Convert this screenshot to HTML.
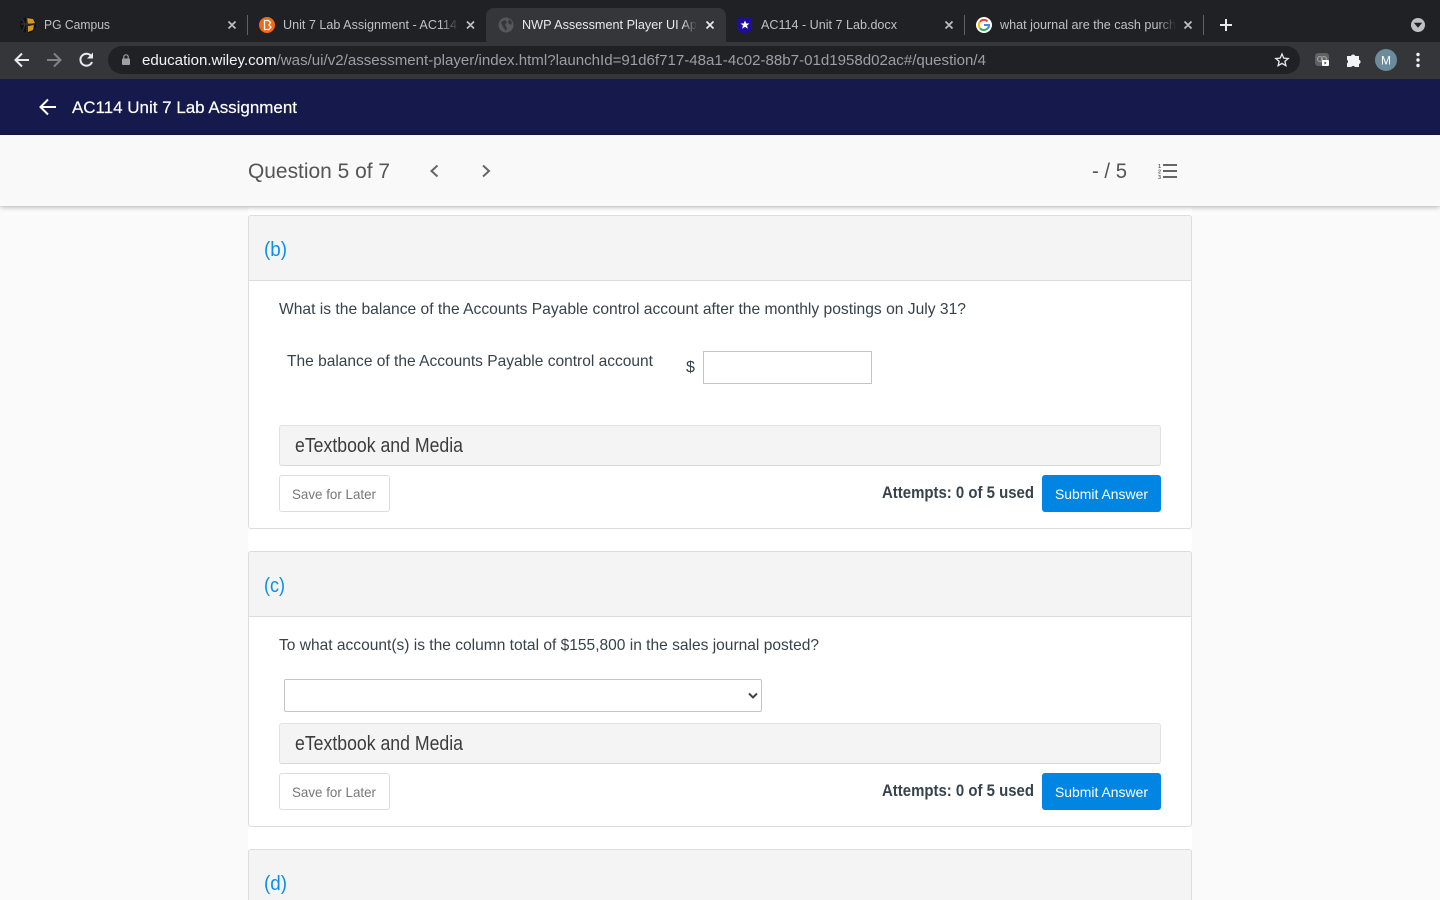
<!DOCTYPE html>
<html lang="en"><head><meta charset="utf-8"><title>NWP Assessment Player UI App</title>
<style>
html,body{margin:0;padding:0;width:1440px;height:900px;overflow:hidden;background:#fafafa;font-family:"Liberation Sans",sans-serif}
.b{position:absolute;box-sizing:border-box}
svg{position:absolute;left:0;top:0}
text{font-family:"Liberation Sans",sans-serif}
</style></head><body>
<!-- chrome -->
<div class="b" style="left:0;top:0;width:1440px;height:42px;background:#202124"></div>
<div class="b" style="left:0;top:42px;width:1440px;height:37px;background:#35363a"></div>
<div class="b" style="left:486px;top:8px;width:240px;height:34px;background:#35363a;border-radius:8px 8px 0 0"></div>
<div class="b" style="left:108px;top:46px;width:1192px;height:28px;background:#202124;border-radius:14px"></div>
<div class="b" style="left:0;top:79px;width:1440px;height:56px;background:#15194b"></div>
<!-- page -->
<div class="b" style="left:248px;top:207px;width:944px;height:693px;background:#fff"></div>
<div class="b" style="left:0;top:135px;width:1440px;height:71px;background:#f9f9f9;box-shadow:0 1px 5px rgba(0,0,0,.3)"></div>
<!-- card b -->
<div class="b" style="left:248px;top:215px;width:944px;height:314px;background:#fff;border:1px solid #ddd;border-radius:3px"></div>
<div class="b" style="left:248px;top:215px;width:944px;height:66px;background:#f4f4f4;border:1px solid #ddd;border-radius:3px 3px 0 0"></div>
<div class="b" style="left:703px;top:351px;width:169px;height:33px;background:#fff;border:1px solid #c4c4c4"></div>
<div class="b" style="left:279px;top:425px;width:882px;height:41px;background:#f4f4f4;border:1px solid #e2e2e2;border-bottom-color:#d8d8d8;border-radius:3px"></div>
<div class="b" style="left:279px;top:475px;width:111px;height:37px;background:#fff;border:1px solid #ddd;border-radius:3px"></div>
<div class="b" style="left:1042px;top:475px;width:119px;height:37px;background:#0085e3;border-radius:3px"></div>
<!-- card c -->
<div class="b" style="left:248px;top:551px;width:944px;height:276px;background:#fff;border:1px solid #ddd;border-radius:3px"></div>
<div class="b" style="left:248px;top:551px;width:944px;height:66px;background:#f4f4f4;border:1px solid #ddd;border-radius:3px 3px 0 0"></div>
<div class="b" style="left:284px;top:679px;width:478px;height:33px;background:#fff;border:1px solid #c4c4c4;border-radius:2px"></div>
<div class="b" style="left:279px;top:723px;width:882px;height:41px;background:#f4f4f4;border:1px solid #e2e2e2;border-bottom-color:#d8d8d8;border-radius:3px"></div>
<div class="b" style="left:279px;top:773px;width:111px;height:37px;background:#fff;border:1px solid #ddd;border-radius:3px"></div>
<div class="b" style="left:1042px;top:773px;width:119px;height:37px;background:#0085e3;border-radius:3px"></div>
<!-- card d -->
<div class="b" style="left:248px;top:849px;width:944px;height:51px;background:#f4f4f4;border:1px solid #ddd;border-bottom:0;border-radius:3px 3px 0 0"></div>

<svg width="1440" height="900" viewBox="0 0 1440 900" xmlns="http://www.w3.org/2000/svg">
<defs>
<linearGradient id="f1" x1="0" x2="1"><stop offset="0" stop-color="#202124" stop-opacity="0"/><stop offset="1" stop-color="#202124"/></linearGradient>
<linearGradient id="f2" x1="0" x2="1"><stop offset="0" stop-color="#35363a" stop-opacity="0"/><stop offset="1" stop-color="#35363a"/></linearGradient>
</defs>
<!-- tab separators -->
<g stroke="#5f6368" stroke-width="1"><path d="M247.500 15V35M964.500 15V35M1203.500 15V35"/></g>
<!-- favicons -->
<circle cx="28" cy="25" r="8" fill="#111"/><path d="M27 18l6 1 2 4-7 1zM28 26l6-1-1 5-5 2z" fill="#d8981a"/><path d="M21 24h14M27 17v16M22 19q5 6 0 12" stroke="#3a3a3a" fill="none"/>
<circle cx="267" cy="25" r="8" fill="#f26a12"/><path d="M264.500 20.500h4l2 2-1.500 2.500 2 2-2 2.500h-4.500z" fill="none" stroke="#fff" stroke-width="1.300"/>
<circle cx="506" cy="25" r="7.500" fill="#55585d"/><path d="M501 22l4-2 2 2-2 3 2 3-1 3-3-4zM509 19l3 3-1 3-3-2z" fill="#35363a"/>
<path d="M737 18h4l2 1 2-1h4 3v12l-7 4-8-4z" fill="#1d0e9c"/><path d="M745 20.500l1.300 3h3.200l-2.500 2 .9 3.200-2.900-1.800-2.900 1.800.9-3.200-2.500-2h3.200z" fill="#fff"/>
<circle cx="984" cy="25" r="8" fill="#fff"/>
<g fill="none" stroke-width="2">
<path d="M980 21.800a5 5 0 0 1 7.500-.4" stroke="#ea4335"/>
<path d="M980 28.200a5 5 0 0 1 0-6.400" stroke="#fbbc05"/>
<path d="M987.400 28.600a5 5 0 0 1-7.400-.4" stroke="#34a853"/>
<path d="M984 25h5q0 2.300-1.600 3.600" stroke="#4285f4"/>
</g>
<!-- tab titles -->
<g font-size="12.500">
<text x="44" y="29" fill="#bdc1c6" textLength="66" lengthAdjust="spacingAndGlyphs">PG Campus</text>
<text x="283" y="29" fill="#bdc1c6" textLength="174" lengthAdjust="spacingAndGlyphs">Unit 7 Lab Assignment - AC114</text>
<text x="522" y="29" fill="#e8eaed" textLength="182" lengthAdjust="spacingAndGlyphs">NWP Assessment Player UI App</text>
<text x="761" y="29" fill="#bdc1c6" textLength="136" lengthAdjust="spacingAndGlyphs">AC114 - Unit 7 Lab.docx</text>
<text x="1000" y="29" fill="#bdc1c6" textLength="176" lengthAdjust="spacingAndGlyphs">what journal are the cash purch</text>
</g>
<rect x="441" y="14" width="18" height="22" fill="url(#f1)"/>
<rect x="681" y="14" width="16" height="22" fill="url(#f2)"/>
<rect x="697" y="14" width="8" height="22" fill="#35363a"/>
<rect x="1158" y="14" width="18" height="22" fill="url(#f1)"/>
<!-- close x -->
<g stroke-width="1.700" fill="none">
<path stroke="#bdc1c6" d="M228.500 21.500l7 7M235.500 21.500l-7 7M467 21.500l7 7M474 21.500l-7 7M945.500 21.500l7 7M952.500 21.500l-7 7M1184.500 21.500l7 7M1191.500 21.500l-7 7"/>
<path stroke="#e8eaed" d="M706.500 21.500l7 7M713.500 21.500l-7 7"/>
</g>
<path d="M1226 19v12M1220 25h12" stroke="#e8eaed" stroke-width="2" fill="none"/>
<circle cx="1418" cy="25" r="7" fill="#bdc1c6"/><path d="M1413.800 22.800h8.400l-4.200 5z" fill="#202124"/>
<!-- nav -->
<g fill="none" stroke-width="2" stroke-linejoin="miter">
<path stroke="#e8eaed" d="M29 60H16M22 53.500L15.500 60l6.500 6.500"/>
<path stroke="#808285" d="M47 60h13M54 53.500l6.500 6.500-6.500 6.500"/>
<path stroke="#e8eaed" d="M91.500 56.500A6 6 0 1 0 92 62"/>
</g>
<path d="M93 52.500v6h-6z" fill="#e8eaed"/>
<rect x="122" y="58.500" width="8" height="6.500" rx="1" fill="#9aa0a6"/><path d="M123.800 59v-2a2.200 2.200 0 0 1 4.400 0v2" fill="none" stroke="#9aa0a6" stroke-width="1.200"/>
<text x="142" y="65" font-size="14.500" textLength="844" lengthAdjust="spacingAndGlyphs" fill="#9aa0a6"><tspan fill="#f1f3f4">education.wiley.com</tspan>/was/ui/v2/assessment-player/index.html?launchId=91d6f717-48a1-4c02-88b7-01d1958d02ac#/question/4</text>
<path d="M1282 54l1.800 4.100 4.400.4-3.300 2.900 1 4.300-3.900-2.300-3.900 2.300 1-4.300-3.300-2.900 4.400-.4z" fill="none" stroke="#e8eaed" stroke-width="1.300"/>
<rect x="1315" y="53" width="14" height="13" rx="3" fill="#5f6165"/><circle cx="1320" cy="59" r="2.500" fill="none" stroke="#9a9a9a" stroke-width="1.300"/><circle cx="1324" cy="59" r="2.500" fill="none" stroke="#9a9a9a" stroke-width="1.300"/>
<rect x="1322" y="60" width="7" height="6" rx="1" fill="#fff"/><path d="M1324.500 61.500l2 1.500-2 1.500z" fill="#35363a"/>
<path d="M1347 56.500h4a2.200 2.200 0 0 1 4.200 0h3.800v3.800a2.200 2.200 0 0 1 0 4.200V67.500h-4a2.200 2.200 0 0 0-3.800 0H1347v-3.500a2.200 2.200 0 0 0 0-3.700z" fill="#f1f3f4" transform="translate(0 -.5)"/>
<circle cx="1386" cy="60" r="11" fill="#6c8c9c"/>
<text x="1386" y="64.500" font-size="12" fill="#fff" text-anchor="middle">M</text>
<g fill="#f1f3f4"><circle cx="1418" cy="54.500" r="1.700"/><circle cx="1418" cy="60" r="1.700"/><circle cx="1418" cy="65.500" r="1.700"/></g>
<!-- blue header -->
<path d="M56 107H41M48 99.500L40.500 107l7.500 7.500" fill="none" stroke="#fff" stroke-width="2"/>
<text x="72" y="113" font-size="17" font-weight="400" fill="#fff" stroke="#fff" stroke-width=".2" textLength="225" lengthAdjust="spacingAndGlyphs">AC114 Unit 7 Lab Assignment</text>
<!-- question bar -->
<text x="248" y="178" font-size="21" fill="#555" textLength="142" lengthAdjust="spacingAndGlyphs">Question 5 of 7</text>
<path d="M437.500 165.500l-6 5.500 6 5.500M483 165.500l6 5.500-6 5.500" fill="none" stroke="#666" stroke-width="2"/>
<text x="1092" y="178" font-size="21" fill="#555" textLength="35" lengthAdjust="spacingAndGlyphs">- / 5</text>
<path d="M1163 165h14M1163 171h14M1163 177h14" stroke="#666" stroke-width="2" fill="none"/>
<text x="1158" y="168" font-size="5.500" fill="#666" font-weight="700">1</text><text x="1158" y="173.500" font-size="5.500" fill="#666" font-weight="700">2</text><text x="1158" y="179" font-size="5.500" fill="#666" font-weight="700">3</text>
<!-- card b text -->
<text x="264" y="256" font-size="20" fill="#0a8fe8" textLength="23" lengthAdjust="spacingAndGlyphs">(b)</text>
<text x="279" y="314" font-size="16" fill="#37424a" textLength="687" lengthAdjust="spacingAndGlyphs">What is the balance of the Accounts Payable control account after the monthly postings on July 31?</text>
<text x="287" y="366" font-size="16" fill="#37424a" textLength="366" lengthAdjust="spacingAndGlyphs">The balance of the Accounts Payable control account</text>
<text x="686" y="372" font-size="16" fill="#37424a">$</text>
<text x="295" y="452" font-size="20" fill="#3c3c3c" textLength="168" lengthAdjust="spacingAndGlyphs">eTextbook and Media</text>
<text x="292" y="499" font-size="14" fill="#777" textLength="84" lengthAdjust="spacingAndGlyphs">Save for Later</text>
<text x="882" y="498" font-size="17" font-weight="700" fill="#37424a" textLength="152" lengthAdjust="spacingAndGlyphs">Attempts: 0 of 5 used</text>
<text x="1055" y="499" font-size="14" fill="#fff" textLength="93" lengthAdjust="spacingAndGlyphs">Submit Answer</text>
<!-- card c text -->
<text x="264" y="592" font-size="20" fill="#0a8fe8" textLength="21" lengthAdjust="spacingAndGlyphs">(c)</text>
<text x="279" y="650" font-size="16" fill="#37424a" textLength="540" lengthAdjust="spacingAndGlyphs">To what account(s) is the column total of $155,800 in the sales journal posted?</text>
<path d="M749 693.500l4 4 4-4" fill="none" stroke="#444" stroke-width="2"/>
<text x="295" y="750" font-size="20" fill="#3c3c3c" textLength="168" lengthAdjust="spacingAndGlyphs">eTextbook and Media</text>
<text x="292" y="797" font-size="14" fill="#777" textLength="84" lengthAdjust="spacingAndGlyphs">Save for Later</text>
<text x="882" y="796" font-size="17" font-weight="700" fill="#37424a" textLength="152" lengthAdjust="spacingAndGlyphs">Attempts: 0 of 5 used</text>
<text x="1055" y="797" font-size="14" fill="#fff" textLength="93" lengthAdjust="spacingAndGlyphs">Submit Answer</text>
<!-- card d text -->
<text x="264" y="890" font-size="20" fill="#0a8fe8" textLength="23" lengthAdjust="spacingAndGlyphs">(d)</text>
</svg>
</body></html>
